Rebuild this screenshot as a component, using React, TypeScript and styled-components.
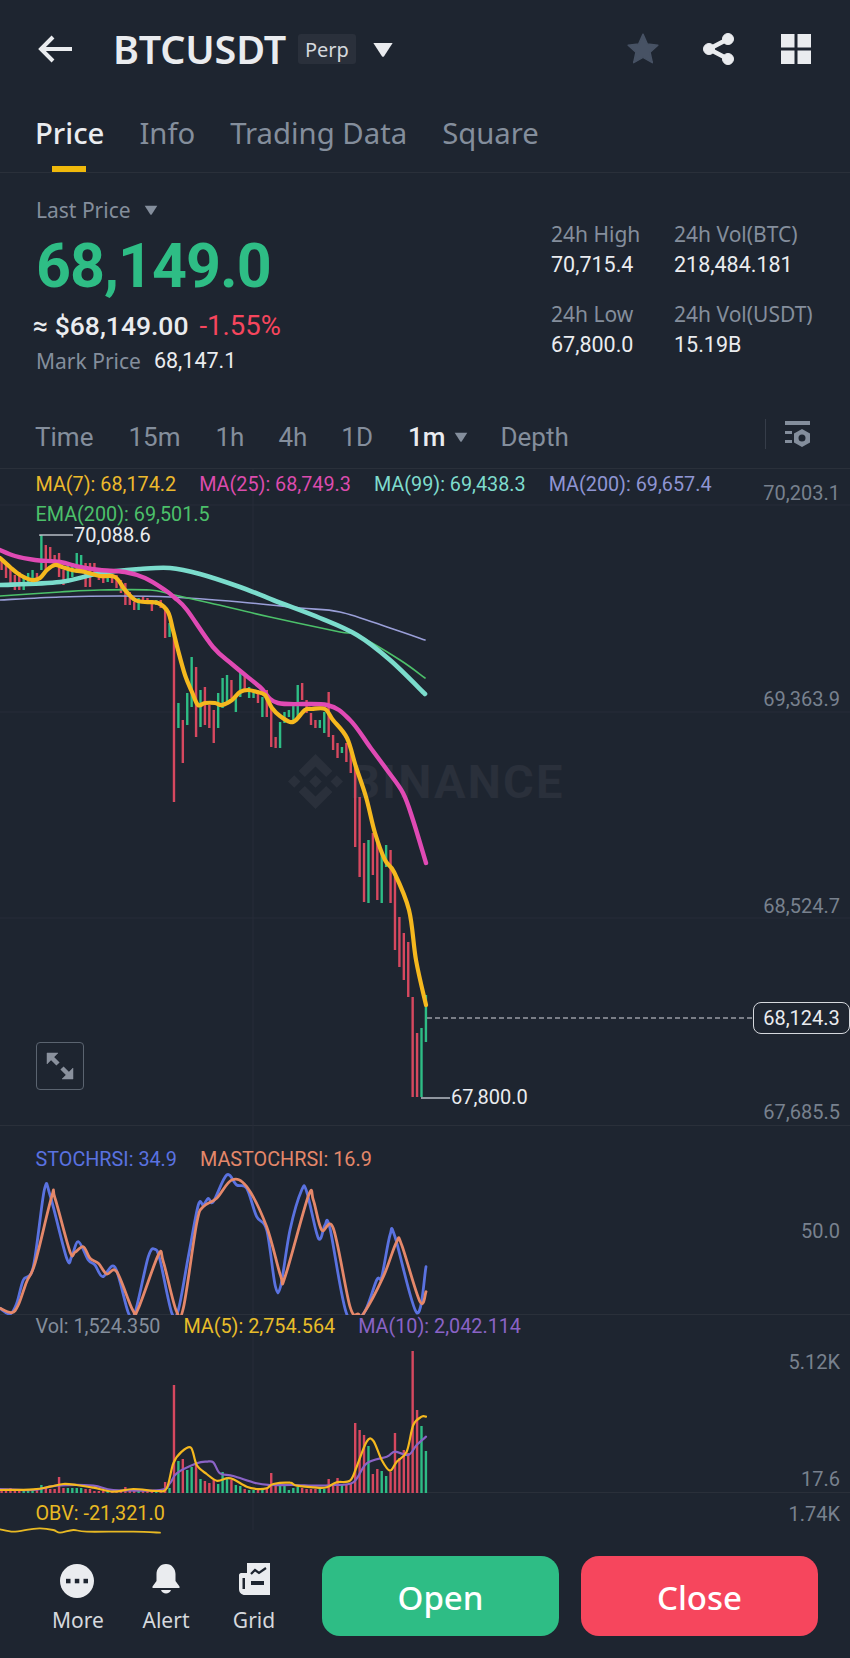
import styled, { createGlobalStyle } from 'styled-components';

type Pt = [number, number];

const GlobalStyle = createGlobalStyle`
  html, body {
    margin: 0;
    padding: 0;
    background: #1e2530;
  }
  body {
    font-family: "Noto Sans", Roboto, sans-serif;
  }
`;

const CANDLE_GAP = 4.42;
const GREEN = '#2ebd85';
const RED = '#d6485f';

// candles left to right: top y, bottom y, g/r (page coordinates)
const candles: [number, number, string][] = [
  [560, 570, 'r'], [563, 578, 'r'], [567, 583, 'r'], [575, 590, 'r'], [572, 590, 'r'],
  [577, 590, 'g'], [573, 585, 'g'], [570, 580, 'g'], [573, 582, 'r'],
  [535, 570, 'g'], [545, 570, 'r'], [547, 563, 'r'], [555, 567, 'r'], [553, 577, 'r'],
  [570, 585, 'r'], [563, 583, 'g'], [563, 577, 'g'], [553, 573, 'g'], [555, 570, 'g'],
  [563, 587, 'r'], [563, 587, 'r'], [563, 573, 'r'], [570, 580, 'r'], [575, 583, 'r'],
  [573, 582, 'g'], [575, 583, 'r'], [575, 588, 'r'], [580, 593, 'r'], [583, 605, 'r'],
  [592, 605, 'r'], [602, 610, 'r'], [598, 610, 'g'], [597, 603, 'r'], [598, 603, 'r'],
  [600, 611, 'r'], [600, 605, 'g'], [600, 608, 'r'], [610, 638, 'r'], [623, 637, 'g'],
  [635, 802, 'r'], [703, 728, 'g'], [720, 763, 'r'], [693, 725, 'g'], [657, 707, 'g'],
  [667, 737, 'r'], [690, 727, 'g'], [687, 725, 'r'], [705, 728, 'r'], [710, 743, 'r'],
  [693, 728, 'g'], [678, 708, 'g'], [675, 705, 'g'], [680, 698, 'r'], [697, 712, 'g'],
  [673, 697, 'g'], [675, 692, 'r'], [687, 698, 'g'], [690, 698, 'g'], [690, 703, 'r'],
  [697, 717, 'g'], [690, 717, 'r'], [707, 747, 'r'], [737, 748, 'r'], [722, 748, 'g'],
  [712, 723, 'g'], [710, 717, 'g'], [705, 723, 'g'], [685, 718, 'g'], [683, 700, 'r'],
  [700, 713, 'r'], [713, 725, 'r'], [720, 728, 'r'], [720, 728, 'g'], [712, 733, 'g'],
  [692, 737, 'r'], [735, 750, 'r'], [743, 758, 'r'], [747, 753, 'g'], [743, 762, 'r'],
  [750, 773, 'r'], [767, 847, 'r'], [797, 877, 'r'], [843, 902, 'r'], [840, 903, 'g'],
  [833, 875, 'r'], [843, 900, 'r'], [853, 903, 'g'], [845, 867, 'g'], [850, 903, 'r'],
  [877, 950, 'r'], [917, 967, 'r'], [933, 980, 'r'], [942, 997, 'r'], [997, 1097, 'r'],
  [1033, 1097, 'r'], [1028, 1097, 'g'], [995, 1042, 'g'],
];

const volumes = [
  3, 4, 5, 3, 4, 3, 3, 3, 3, 8, 5, 4, 4, 16, 5, 5, 5, 5, 5, 4, 4, 2, 2, 2, 2, 2, 3, 2, 6, 3, 2, 3, 2, 2, 2, 2, 3, 11, 5,
  108, 32, 34, 23, 26, 29, 14, 12, 10, 13, 9, 21, 16, 13, 8, 7, 4, 3, 3, 3, 4, 4, 20, 8, 8, 7, 3, 5, 6, 5, 4, 4,
  4, 4, 4, 14, 8, 15, 8, 8, 9, 70, 63, 58, 47, 19, 24, 22, 17, 21, 60, 35, 43, 40, 142, 83, 67, 42,
];

const ma7: Pt[] = [
  [0, 558], [10, 567], [20, 575], [32, 580], [40, 578], [47, 570], [55, 565], [62, 567], [72, 570], [85, 572],
  [100, 576], [115, 577], [125, 590], [135, 600], [145, 602], [158, 603], [168, 612], [173, 630], [178, 650],
  [185, 675], [192, 692], [198, 705], [205, 703], [215, 703], [222, 705], [232, 700], [240, 692], [248, 690],
  [257, 692], [265, 695], [272, 708], [280, 716], [290, 722], [296, 720], [305, 710], [312, 709], [325, 709],
  [333, 720], [347, 738], [356, 767], [366, 797], [375, 833], [385, 860], [394, 872], [409, 910], [416, 960],
  [426, 1005],
];
const ma25: Pt[] = [
  [0, 550], [15, 556], [35, 560], [60, 562], [80, 567], [100, 570], [125, 572], [145, 578], [165, 590], [175, 598],
  [187, 610], [213, 647], [233, 665], [260, 687], [278, 703], [327, 705], [350, 720], [370, 747], [387, 770],
  [403, 793], [413, 820], [426, 863],
];
const ma99: Pt[] = [
  [0, 585], [60, 582], [100, 573], [140, 569], [170, 568], [200, 574], [240, 587], [273, 600], [320, 618],
  [357, 635], [390, 660], [425, 694],
];
const ema200: Pt[] = [
  [0, 596], [60, 592], [100, 590], [150, 590], [170, 594], [210, 603], [270, 617], [340, 632], [357, 635],
  [400, 660], [425, 678],
];
const ma200: Pt[] = [
  [0, 600], [60, 597], [120, 596], [170, 597], [240, 602], [300, 608], [340, 612], [390, 628], [425, 640],
];

// oscillator and volume lines were read off at 3x, so they are scaled down when drawn
const stochBlue: Pt[] = [
  [0, 535], [30, 552], [50, 520], [70, 450], [100, 410], [133, 180], [150, 195], [200, 385], [215, 380], [235, 335],
  [265, 390], [285, 405], [308, 440], [345, 412], [385, 548], [405, 548], [445, 380], [465, 358], [480, 390],
  [515, 548], [535, 540], [565, 380], [595, 225], [610, 225], [625, 205], [640, 215], [680, 135], [710, 165],
  [740, 175], [770, 260], [800, 300], [826, 468], [842, 468], [870, 300], [905, 180], [920, 185], [950, 310],
  [962, 325], [975, 285], [990, 295], [1040, 552], [1090, 552], [1130, 450], [1145, 440], [1170, 315], [1185, 320],
  [1250, 548], [1278, 410],
];
const stochOrange: Pt[] = [
  [0, 535], [35, 548], [55, 525], [80, 455], [105, 400], [155, 200], [165, 205], [210, 365], [225, 367], [250, 350],
  [270, 385], [295, 400], [320, 432], [350, 425], [398, 540], [415, 535], [475, 375], [490, 395], [528, 540],
  [550, 535], [590, 280], [610, 230], [650, 205], [695, 150], [740, 170], [800, 290], [842, 438], [856, 438],
  [925, 198], [940, 210], [965, 300], [1000, 295], [1050, 530], [1075, 552], [1090, 552], [1150, 440], [1190, 335],
  [1205, 345], [1260, 515], [1278, 485],
];
const volMa5: Pt[] = [
  [0, 510], [100, 508], [150, 500], [190, 492], [230, 495], [280, 503], [340, 515], [400, 507], [470, 513],
  [500, 505], [520, 430], [545, 395], [573, 383], [590, 435], [620, 462], [650, 482], [680, 475], [700, 478],
  [740, 500], [770, 507], [800, 505], [820, 492], [870, 488], [890, 497], [950, 503], [980, 502], [1010, 487],
  [1050, 482], [1070, 440], [1100, 365], [1120, 362], [1145, 420], [1170, 452], [1190, 425], [1220, 395],
  [1240, 315], [1265, 290], [1278, 290],
];
const volMa10: Pt[] = [
  [0, 507], [100, 510], [170, 497], [280, 497], [340, 510], [480, 510], [510, 490], [530, 460], [590, 430],
  [620, 425], [640, 427], [660, 460], [700, 468], [770, 490], [810, 495], [880, 495], [950, 497], [1000, 495],
  [1060, 487], [1100, 430], [1160, 410], [1185, 395], [1225, 405], [1250, 375], [1278, 350],
];
const obv: Pt[] = [
  [0, 628], [40, 635], [90, 628], [120, 625], [160, 630], [180, 638], [220, 630], [260, 635], [400, 635], [480, 638],
];

const down3 = (pts: Pt[], top: number): Pt[] => pts.map(([x, y]) => [x / 3, top + y / 3]);

// catmull-rom through the points
const smooth = (pts: Pt[]) => {
  let d = `M${pts[0][0]} ${pts[0][1]}`;
  for (let i = 0; i < pts.length - 1; i++) {
    const p0 = pts[i - 1] || pts[i];
    const p1 = pts[i];
    const p2 = pts[i + 1];
    const p3 = pts[i + 2] || p2;
    const c1x = p1[0] + (p2[0] - p0[0]) / 6;
    const c1y = p1[1] + (p2[1] - p0[1]) / 6;
    const c2x = p2[0] - (p3[0] - p1[0]) / 6;
    const c2y = p2[1] - (p3[1] - p1[1]) / 6;
    d += `C${c1x.toFixed(1)} ${c1y.toFixed(1)} ${c2x.toFixed(1)} ${c2y.toFixed(1)} ${p2[0].toFixed(1)} ${p2[1].toFixed(1)}`;
  }
  return d;
};

const Page = styled.div`
  width: 850px;
  height: 1658px;
  overflow: hidden;
  background: #1e2530;
  color: #eaecef;
`;

const Header = styled.header`
  height: 98px;
  display: flex;
  align-items: center;
  padding: 0 39px 0 38px;
  box-sizing: border-box;
`;

const Symbol = styled.div`
  margin-left: 41px;
  font-size: 39.5px;
  font-weight: 600;
  letter-spacing: -0.2px;
  color: #eaecef;
`;

const Badge = styled.span`
  margin-left: 12px;
  width: 58px;
  height: 30px;
  display: flex;
  align-items: center;
  justify-content: center;
  background: #2a303b;
  border-radius: 3px;
  font-size: 20px;
  color: #d5d8dd;
`;

const DropCaret = styled.svg`
  margin-left: 16px;
`;

const HeaderActions = styled.div`
  margin-left: auto;
  display: flex;
  align-items: center;
  gap: 43px;
`;

const LayoutIcon = styled.svg`
  margin-left: 4px;
`;

const Tabs = styled.nav`
  height: 75px;
  display: flex;
  gap: 35px;
  padding: 14px 0 0 35px;
  box-sizing: border-box;
  border-bottom: 1px solid #2a303a;
`;

const Tab = styled.div<{ $active?: boolean }>`
  position: relative;
  height: 60px;
  font-size: 29.3px;
  line-height: 42px;
  font-weight: ${(p) => (p.$active ? 500 : 400)};
  color: ${(p) => (p.$active ? '#eaecef' : '#848e9c')};

  &::after {
    content: '';
    display: ${(p) => (p.$active ? 'block' : 'none')};
    position: absolute;
    left: 17px;
    bottom: 0;
    width: 34px;
    height: 6px;
    background: #f0b90b;
  }
`;

const Stats = styled.section`
  height: 236px;
  display: flex;
  justify-content: space-between;
  padding: 25px 0 0 36px;
  box-sizing: border-box;
`;

const PriceBlock = styled.div`
  display: flex;
  flex-direction: column;
`;

const MutedRow = styled.div`
  display: flex;
  align-items: center;
  font-size: 21px;
  line-height: 24px;
  color: #848e9c;
  gap: 13px;
`;

const BigPrice = styled.div`
  font-family: Roboto, sans-serif;
  font-size: 61px;
  line-height: 72px;
  font-weight: 700;
  color: ${GREEN};
  margin: 8px 0 7px 0;
  letter-spacing: -1px;
`;

const FiatRow = styled.div`
  display: flex;
  gap: 11px;
  margin-left: -3px;
  font-family: Roboto, sans-serif;
  font-size: 26.5px;
  line-height: 34px;
  font-weight: 500;
  color: #eaecef;
`;

const Change = styled.span`
  color: #f6465d;
  font-size: 27.5px;
  font-weight: 400;
`;

const MarkRow = styled(MutedRow)`
  margin-top: 6px;
`;

const MarkValue = styled.span`
  font-family: Roboto, sans-serif;
  font-size: 21.5px;
  color: #eaecef;
`;

const StatGrid = styled.div`
  width: 299px;
  display: grid;
  grid-template-columns: 123px 176px;
  grid-auto-rows: 80px;
  padding-top: 23px;
`;

const StatCell = styled.div`
  display: flex;
  flex-direction: column;
  gap: 5px;
`;

const StatLabel = styled.span`
  font-size: 21px;
  line-height: 26px;
  color: #848e9c;
  white-space: nowrap;
`;

const StatValue = styled.span`
  font-family: Roboto, sans-serif;
  font-size: 21.5px;
  line-height: 26px;
  color: #eaecef;
`;

const Timeframes = styled.div`
  height: 60px;
  box-sizing: border-box;
  display: flex;
  align-items: flex-start;
  padding: 8px 38px 0 35px;
  border-bottom: 1px solid #2a303a;
`;

const Frame = styled.div<{ $left: number; $active?: boolean }>`
  margin-left: ${(p) => p.$left}px;
  display: flex;
  align-items: center;
  gap: 9px;
  font-family: Roboto, sans-serif;
  font-size: 26px;
  line-height: 40px;
  font-weight: ${(p) => (p.$active ? 500 : 400)};
  color: ${(p) => (p.$active ? '#eaecef' : '#848e9c')};
`;

const FrameTools = styled.div`
  margin-left: auto;
  display: flex;
  align-items: center;
  gap: 18px;
  height: 34px;
`;

const ToolDivider = styled.div`
  width: 1px;
  height: 30px;
  background: #363d49;
`;

const ChartPanel = styled.section<{ $height: number }>`
  position: relative;
  height: ${(p) => p.$height}px;
  box-sizing: border-box;
  border-bottom: 1px solid #2a303a;
`;

const PlainPanel = styled(ChartPanel)`
  border-bottom: none;
`;

const ChartSvg = styled.svg`
  position: absolute;
  inset: 0;
  width: 850px;
`;

const Legends = styled.div<{ $pad: number }>`
  position: relative;
  display: flex;
  flex-wrap: wrap;
  width: 710px;
  column-gap: 23px;
  row-gap: 8px;
  padding: ${(p) => p.$pad}px 0 0 35.5px;
  font-family: Roboto, sans-serif;
  font-size: 19.8px;
  line-height: 22px;
`;

const Legend = styled.span<{ $color: string }>`
  color: ${(p) => p.$color};
  white-space: nowrap;
`;

const AxisLabel = styled.span<{ $top: number }>`
  position: absolute;
  right: 10px;
  top: ${(p) => p.$top}px;
  font-family: Roboto, sans-serif;
  font-size: 20px;
  line-height: 24px;
  color: #78818e;
`;

const PriceNote = styled.span<{ $left: number; $top: number }>`
  position: absolute;
  left: ${(p) => p.$left}px;
  top: ${(p) => p.$top}px;
  font-family: Roboto, sans-serif;
  font-size: 20px;
  line-height: 16px;
  color: #eaecef;
`;

const LastTag = styled.div`
  position: absolute;
  right: 0;
  top: 533px;
  width: 97px;
  height: 32px;
  box-sizing: border-box;
  border: 1.5px solid #d5d8dd;
  border-radius: 8px;
  display: flex;
  align-items: center;
  justify-content: center;
  background: #1e2530;
  font-family: Roboto, sans-serif;
  font-size: 20px;
  color: #eaecef;
`;

const Watermark = styled.div`
  position: absolute;
  left: 288px;
  top: 285px;
  display: flex;
  align-items: center;
  gap: 7px;
  font-family: Roboto, sans-serif;
  font-size: 47px;
  line-height: 54px;
  font-weight: 700;
  letter-spacing: 2.2px;
  color: #2a303b;
`;

const ExpandButton = styled.div`
  position: absolute;
  left: 36px;
  top: 573px;
  width: 48px;
  height: 48px;
  box-sizing: border-box;
  border: 1.5px solid #5b6470;
  border-radius: 4px;
  display: flex;
  align-items: center;
  justify-content: center;
`;

const BottomBar = styled.footer`
  height: 110px;
  box-sizing: border-box;
  display: flex;
  padding: 8px 0 0 34px;
`;

const NavItem = styled.div`
  width: 88px;
  height: 80px;
  display: flex;
  flex-direction: column;
  align-items: center;
  gap: 8px;
  padding-top: 6px;
  box-sizing: border-box;
  font-size: 21px;
  line-height: 28px;
  color: #d5d8dd;
`;

const NavIcon = styled.svg`
  width: 36px;
  height: 36px;
  flex: none;
`;

const ActionButton = styled.button<{ $bg: string }>`
  width: 237px;
  height: 80px;
  margin-left: 22px;
  padding: 3px 0 0;
  border: none;
  border-radius: 18px;
  background: ${(p) => p.$bg};
  color: #ffffff;
  font-family: "Noto Sans", Roboto, sans-serif;
  font-size: 33px;
  font-weight: 500;
`;

const OpenButton = styled(ActionButton)`
  margin-left: 24px;
`;

const Caret = ({ size, color }: { size: number; color: string }) => (
  <svg width={size} height={size * 0.72} viewBox="0 0 20 14">
    <path d="M1 1h18L11 13.2c-.5.7-1.5.7-2 0z" fill={color} />
  </svg>
);

const Line = ({ d, color, w }: { d: string; color: string; w: number }) => (
  <path d={d} fill="none" stroke={color} strokeWidth={w} strokeLinecap="round" strokeLinejoin="round" />
);

const barX = (i: number) => 1.6 + i * CANDLE_GAP;

function MainChart() {
  return (
    <ChartPanel $height={657}>
      <Watermark>
        <svg width="55" height="55" viewBox="0 0 126.61 126.61" fill="#2a303b">
          <path d="M38.73 53.2l24.59-24.58 24.6 24.6 14.3-14.31L63.32 0 24.42 38.9zM0 63.31l14.3-14.31 14.31 14.31-14.31 14.3zM38.73 73.41l24.59 24.59 24.6-24.6 14.31 14.29-38.9 38.91-38.91-38.88-.02-.02zM98 63.31l14.3-14.31 14.31 14.3-14.31 14.32zM77.83 63.3L63.32 48.78 52.59 59.51l-1.24 1.23-2.54 2.54 14.51 14.5 14.51-14.47z" />
        </svg>
        BINANCE
      </Watermark>
      <ChartSvg height="657" viewBox="0 469 850 657">
        <path d="M253 469V1126M0 505H850M0 712H850M0 918H850" stroke="#262d38" strokeWidth="1" />
        {candles.map(([top, bottom, c], i) => (
          <rect key={i} x={barX(i) - 1.2} y={top} width="2.4" height={bottom - top} fill={c === 'g' ? GREEN : RED} />
        ))}
        <Line d={smooth(ma200)} color="#9a9fd8" w={1.6} />
        <Line d={smooth(ema200)} color="#4cc06a" w={1.6} />
        <Line d={smooth(ma99)} color="#7bdccc" w={4.6} />
        <Line d={smooth(ma25)} color="#e04ab4" w={4.4} />
        <Line d={smooth(ma7)} color="#f5b81e" w={4.2} />
        <path d="M40 536V535H73M421 1098H450" fill="none" stroke="#b7bcc4" strokeWidth="1.5" />
        <path d="M427 1018H753" stroke="#d5d8dd" strokeWidth="1.2" strokeDasharray="5 3" />
      </ChartSvg>
      <Legends $pad={5}>
        <Legend $color="#ecb92c">MA(7): 68,174.2</Legend>
        <Legend $color="#dc4cae">MA(25): 68,749.3</Legend>
        <Legend $color="#7fdccd">MA(99): 69,438.3</Legend>
        <Legend $color="#8f95d3">MA(200): 69,657.4</Legend>
        <Legend $color="#4cc06a">EMA(200): 69,501.5</Legend>
      </Legends>
      <AxisLabel $top={12}>70,203.1</AxisLabel>
      <AxisLabel $top={218}>69,363.9</AxisLabel>
      <AxisLabel $top={425}>68,524.7</AxisLabel>
      <AxisLabel $top={631}>67,685.5</AxisLabel>
      <PriceNote $left={74} $top={58}>70,088.6</PriceNote>
      <PriceNote $left={451} $top={620}>67,800.0</PriceNote>
      <LastTag>68,124.3</LastTag>
      <ExpandButton>
        <svg width="32" height="32" viewBox="0 0 32 32" fill="#8a919d" stroke="#8a919d">
          <path d="M3 3h11L3 14z" strokeWidth="0.5" />
          <path d="M29 29H18L29 18z" strokeWidth="0.5" />
          <path d="M7 7l7 7M25 25l-7-7" strokeWidth="4.5" fill="none" />
        </svg>
      </ExpandButton>
    </ChartPanel>
  );
}

function StochChart() {
  return (
    <ChartPanel $height={189}>
      <ChartSvg height="189" viewBox="0 1126 850 189">
        <path d="M253 1126V1315" stroke="#262d38" strokeWidth="1" />
        <Line d={smooth(down3(stochBlue, 1130))} color="#5a72e0" w={2.8} />
        <Line d={smooth(down3(stochOrange, 1130))} color="#e5886a" w={2.8} />
      </ChartSvg>
      <Legends $pad={23}>
        <Legend $color="#5a72e0">STOCHRSI: 34.9</Legend>
        <Legend $color="#e5886a">MASTOCHRSI: 16.9</Legend>
      </Legends>
      <AxisLabel $top={93}>50.0</AxisLabel>
    </ChartPanel>
  );
}

function VolumeChart() {
  return (
    <ChartPanel $height={178}>
      <ChartSvg height="178" viewBox="0 1315 850 178">
        <path d="M253 1315V1493" stroke="#262d38" strokeWidth="1" />
        {volumes.map((h, i) => (
          <rect
            key={i}
            x={barX(i) - 1.2}
            y={1493 - h}
            width="2.4"
            height={h}
            fill={candles[i][2] === 'g' ? GREEN : RED}
          />
        ))}
        <Line d={smooth(down3(volMa10, 1320))} color="#8a63c6" w={2.2} />
        <Line d={smooth(down3(volMa5, 1320))} color="#f5b81e" w={2.2} />
      </ChartSvg>
      <Legends $pad={1}>
        <Legend $color="#848e9c">Vol: 1,524.350</Legend>
        <Legend $color="#e8bd2a">MA(5): 2,754.564</Legend>
        <Legend $color="#8a63c6">MA(10): 2,042.114</Legend>
      </Legends>
      <AxisLabel $top={35}>5.12K</AxisLabel>
      <AxisLabel $top={152}>17.6</AxisLabel>
    </ChartPanel>
  );
}

function ObvChart() {
  return (
    <PlainPanel $height={55}>
      <ChartSvg height="55" viewBox="0 1493 850 55">
        <path d="M253 1493V1530" stroke="#262d38" strokeWidth="1" />
        <Line d={smooth(down3(obv, 1320))} color="#e8b923" w={1.8} />
      </ChartSvg>
      <Legends $pad={10}>
        <Legend $color="#e8b923">OBV: -21,321.0</Legend>
      </Legends>
      <AxisLabel $top={9}>1.74K</AxisLabel>
    </PlainPanel>
  );
}

export default function App() {
  return (
    <Page>
      <GlobalStyle />
      <Header>
        <svg width="34" height="28" viewBox="0 0 34 28" fill="none" stroke="#eaecef" strokeWidth="4">
          <path d="M34 14H4M15 2L3 14l12 12" />
        </svg>
        <Symbol>BTCUSDT</Symbol>
        <Badge>Perp</Badge>
        <DropCaret width="22" height="15" viewBox="0 0 20 14">
          <path d="M1 1h18L11 13.2c-.5.7-1.5.7-2 0z" fill="#eaecef" />
        </DropCaret>
        <HeaderActions>
          <svg width="34" height="34" viewBox="0 0 24 24" fill="#475264" stroke="#475264" strokeLinejoin="round">
            <path d="M12 1.500l3.100 7 7.400.8-5.500 5 1.600 7.400L12 18l-6.600 3.700L7 14.300l-5.500-5 7.400-.8z" />
          </svg>
          <svg width="31" height="32" viewBox="0 0 31 32" fill="#eaecef" stroke="#eaecef">
            <circle cx="25" cy="6" r="5.500" />
            <circle cx="6" cy="16" r="5.500" />
            <circle cx="25" cy="26" r="5.500" />
            <path d="M25 6L6 16l19 10" fill="none" strokeWidth="4.500" />
          </svg>
          <LayoutIcon width="30" height="30" viewBox="0 0 30 30" fill="#eaecef">
            <rect x="0" y="0" width="13.500" height="13.500" />
            <rect x="16.500" y="0" width="13.500" height="13.500" />
            <rect x="0" y="16.500" width="13.500" height="13.500" />
            <rect x="16.500" y="16.500" width="13.500" height="13.500" />
          </LayoutIcon>
        </HeaderActions>
      </Header>

      <Tabs>
        <Tab $active>Price</Tab>
        <Tab>Info</Tab>
        <Tab>Trading Data</Tab>
        <Tab>Square</Tab>
      </Tabs>

      <Stats>
        <PriceBlock>
          <MutedRow>
            Last Price
            <Caret size={14} color="#848e9c" />
          </MutedRow>
          <BigPrice>68,149.0</BigPrice>
          <FiatRow>
            ≈ $68,149.00
            <Change>-1.55%</Change>
          </FiatRow>
          <MarkRow>
            Mark Price
            <MarkValue>68,147.1</MarkValue>
          </MarkRow>
        </PriceBlock>
        <StatGrid>
          <StatCell>
            <StatLabel>24h High</StatLabel>
            <StatValue>70,715.4</StatValue>
          </StatCell>
          <StatCell>
            <StatLabel>24h Vol(BTC)</StatLabel>
            <StatValue>218,484.181</StatValue>
          </StatCell>
          <StatCell>
            <StatLabel>24h Low</StatLabel>
            <StatValue>67,800.0</StatValue>
          </StatCell>
          <StatCell>
            <StatLabel>24h Vol(USDT)</StatLabel>
            <StatValue>15.19B</StatValue>
          </StatCell>
        </StatGrid>
      </Stats>

      <Timeframes>
        <Frame $left={0}>Time</Frame>
        <Frame $left={35}>15m</Frame>
        <Frame $left={35}>1h</Frame>
        <Frame $left={34}>4h</Frame>
        <Frame $left={34}>1D</Frame>
        <Frame $left={35} $active>
          1m
          <Caret size={14} color="#848e9c" />
        </Frame>
        <Frame $left={32}>Depth</Frame>
        <FrameTools>
          <ToolDivider />
          <svg width="28" height="30" viewBox="0 0 28 30" fill="#848e9c">
            <rect x="1" y="2" width="25" height="4" />
            <rect x="1" y="12" width="7" height="3" />
            <rect x="1" y="21" width="7" height="3" />
            <path
              fillRule="evenodd"
              d="M18 10l8 4.500v9L18 28l-8-4.500v-9zM18 15.500a3.500 3.500 0 100 7 3.500 3.500 0 000-7z"
            />
          </svg>
        </FrameTools>
      </Timeframes>

      <MainChart />
      <StochChart />
      <VolumeChart />
      <ObvChart />

      <BottomBar>
        <NavItem>
          <NavIcon viewBox="0 0 36 36">
            <circle cx="17" cy="19" r="17" fill="#eaecef" />
            <rect x="6" y="16.800" width="4.500" height="4.500" fill="#1e2530" />
            <rect x="14.800" y="16.800" width="4.500" height="4.500" fill="#1e2530" />
            <rect x="23.500" y="16.800" width="4.500" height="4.500" fill="#1e2530" />
          </NavIcon>
          More
        </NavItem>
        <NavItem>
          <NavIcon viewBox="0 0 36 36" fill="#eaecef">
            <path d="M18 2c6 0 9.500 5 9.500 10v7l4 5.500V26h-27v-1.500l4-5.500v-7c0-5 3.500-10 9.500-10z" />
            <path d="M13 28h10c-.7 2-2.700 3.500-5 3.500s-4.300-1.500-5-3.500z" />
          </NavIcon>
          Alert
        </NavItem>
        <NavItem>
          <NavIcon viewBox="0 0 36 36">
            <path
              d="M11 1H34V33H9C5.500 33 3 30.500 3 27V13C3 12 4 11 5 11H11z"
              fill="#eaecef"
            />
            <path d="M15 12l4-4 4 3 7-5" fill="none" stroke="#1e2530" strokeWidth="2.200" />
            <rect x="15" y="19" width="13" height="4" fill="#1e2530" />
            <rect x="6.500" y="16" width="2.500" height="11" fill="#1e2530" />
          </NavIcon>
          Grid
        </NavItem>
        <OpenButton $bg="#2ebd85">Open</OpenButton>
        <ActionButton $bg="#f6465d">Close</ActionButton>
      </BottomBar>
    </Page>
  );
}
